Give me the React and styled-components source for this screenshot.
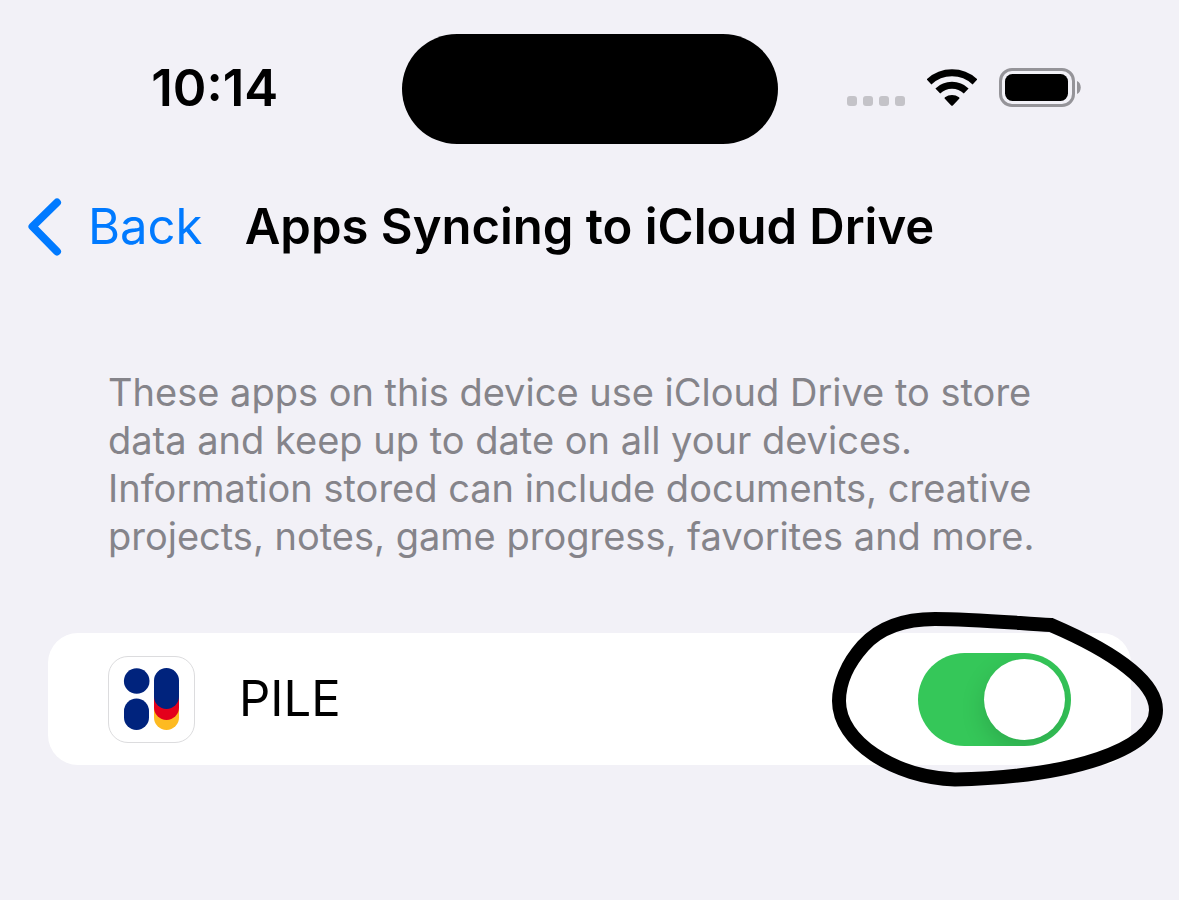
import React, { useState } from "react";
import styled, { createGlobalStyle } from "styled-components";

const GlobalStyle = createGlobalStyle`
  * {
    box-sizing: border-box;
  }
  body {
    margin: 0;
    background: #f2f1f7;
    color: #000;
    font-family: Inter, "Liberation Sans", sans-serif;
  }
`;

function StatusBar() {
  return (
    <Status>
      <Time>10:14</Time>
      <Island />
      <Indicators>
        <Signal>
          <span />
          <span />
          <span />
          <span />
        </Signal>
        <svg width="50" height="38" viewBox="0 0 50 38" aria-label="Wi-Fi">
          <g fill="none" stroke="#000" strokeWidth="7">
            <path d="M2 12.9A33.5 33.5 0 0 1 48 12.9" />
            <path d="M10.8 22A20.7 20.7 0 0 1 39.2 22" />
          </g>
          <path d="M17.6 29.6Q17.2 28.9 18 28.3A11.5 11.5 0 0 1 32 28.3Q32.8 28.9 32.4 29.6L25.8 36.4Q25 37.2 24.2 36.4Z" />
        </svg>
        <svg width="82" height="39" viewBox="0 0 82 39" aria-label="Battery">
          <rect
            x="1.5"
            y="1.5"
            width="73"
            height="36"
            rx="11.5"
            fill="none"
            stroke="#959499"
            strokeWidth="3"
          />
          <rect x="6" y="6" width="63" height="27" rx="7.5" />
          <path d="M78 13C83 15 83 24 78 26Z" fill="#959499" />
        </svg>
      </Indicators>
    </Status>
  );
}

function AppIcon() {
  return (
    <IconFrame>
      <svg width="85" height="85" viewBox="0 0 85 85" aria-hidden="true">
        <rect x="45" y="22" width="25" height="51" rx="12.5" fill="#fdba21" />
        <rect x="45" y="18" width="25" height="45" rx="12.5" fill="#e4001b" />
        <g fill="#00237d">
          <rect x="45" y="11" width="25" height="41" rx="12.5" />
          <circle cx="27.7" cy="24" r="12.8" />
          <rect x="15" y="41.5" width="25" height="31.5" rx="12.5" />
        </g>
      </svg>
    </IconFrame>
  );
}

function App() {
  const [syncing, setSyncing] = useState(true);

  return (
    <>
      <GlobalStyle />
      <StatusBar />
      <NavBar>
        <BackButton type="button">
          <svg width="34" height="58" viewBox="0 0 34 58" aria-hidden="true">
            <path
              d="M29 4.5L4.5 28.5L29 53.5"
              fill="none"
              stroke="#007aff"
              strokeWidth="8"
              strokeLinecap="round"
              strokeLinejoin="round"
            />
          </svg>
          Back
        </BackButton>
        <Title>Apps Syncing to iCloud Drive</Title>
      </NavBar>
      <Main>
        <Description>
          These apps on this device use iCloud Drive to store data and keep up
          to date on all your devices. Information stored can include documents,
          creative projects, notes, game progress, favorites and more.
        </Description>
        <Row>
          <AppIcon />
          <Label htmlFor="pile">PILE</Label>
          <Switch
            id="pile"
            type="checkbox"
            role="switch"
            checked={syncing}
            onChange={(e) => setSyncing(e.target.checked)}
          />
          <Marker width="359" height="200" viewBox="0 0 359 200">
            <path
              d="M231 25C190 22.500 150 19 115 19C85 19 60 27 43 46C27 64 19 84 19 101C19 142 74 177 135 179.500C250 177 336 150 336 110C336 82 294 52 231 25Z"
              fill="none"
              stroke="#000"
              strokeWidth="14"
            />
          </Marker>
        </Row>
      </Main>
    </>
  );
}

export default App;

const Status = styled.header`
  display: grid;
  grid-template-columns: 1fr 376px 1fr;
  align-items: center;
  padding: 34px 0 18px;
`;
const Time = styled.div`
  padding: 0 0 2px 28px;
  font-size: 51px;
  line-height: 60px;
  font-weight: 600;
  text-align: center;
`;
const Island = styled.div`
  height: 110px;
  border-radius: 55px;
  background: #000;
`;
const Indicators = styled.div`
  display: flex;
  justify-content: flex-end;
  align-items: center;
  gap: 22px;
  padding: 0 98px 3px 0;
`;
const Signal = styled.div`
  display: flex;
  align-self: flex-end;
  gap: 6px;
  padding-bottom: 1px;
  span {
    width: 10px;
    height: 10px;
    border-radius: 3px;
    background: #c4c3c8;
  }
`;
const NavBar = styled.nav`
  display: grid;
  grid-template-columns: 1fr auto 1fr;
  align-items: center;
  height: 130px;
`;
const BackButton = styled.button`
  display: flex;
  align-items: center;
  gap: 26px;
  padding: 0 0 0 28px;
  border: 0;
  background: none;
  color: #007aff;
  font-family: inherit;
  font-size: 49px;
  line-height: 60px;
  cursor: pointer;
`;
const Title = styled.h1`
  margin: 0;
  font-size: 49px;
  line-height: 60px;
  font-weight: 600;
  white-space: nowrap;
`;
const Main = styled.main`
  padding-bottom: 48px;
`;
const Description = styled.p`
  margin: 0;
  padding: 76px 108px 73px;
  color: #85848a;
  font-size: 38px;
  line-height: 48px;
`;
const Row = styled.div`
  position: relative;
  display: flex;
  align-items: center;
  min-height: 132px;
  margin: 0 48px;
  padding: 0 60px;
  border-radius: 30px;
  background: #fff;
`;
const IconFrame = styled.div`
  display: flex;
  width: 87px;
  height: 87px;
  border: 1px solid #dcdcde;
  border-radius: 20px;
`;
const Label = styled.label`
  flex: 1;
  padding-left: 44px;
  font-size: 49px;
  line-height: 60px;
`;
const Switch = styled.input`
  appearance: none;
  display: flex;
  align-items: center;
  justify-content: ${(props) => (props.checked ? "flex-end" : "flex-start")};
  width: 153px;
  height: 93px;
  margin: 0;
  padding: 0 6px;
  overflow: hidden;
  border-radius: 47px;
  background: ${(props) => (props.checked ? "#35c759" : "#e9e9eb")};
  cursor: pointer;
  &::before {
    content: "";
    width: 81px;
    height: 81px;
    border-radius: 50%;
    background: #fff;
    box-shadow: 0 9px 24px rgba(0, 0, 0, 0.15);
  }
`;
// hand-drawn ring laid over the switch
const Marker = styled.svg`
  position: absolute;
  top: -33px;
  right: -48px;
  pointer-events: none;
`;
